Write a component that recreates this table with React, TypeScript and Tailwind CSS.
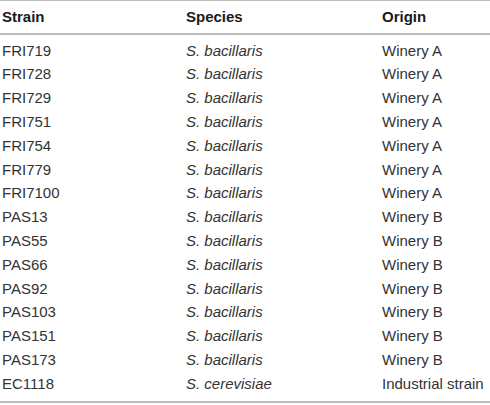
const ROWS: { strain: string; species: string; origin: string }[] = [
  { strain: "FRI719", species: "S. bacillaris", origin: "Winery A" },
  { strain: "FRI728", species: "S. bacillaris", origin: "Winery A" },
  { strain: "FRI729", species: "S. bacillaris", origin: "Winery A" },
  { strain: "FRI751", species: "S. bacillaris", origin: "Winery A" },
  { strain: "FRI754", species: "S. bacillaris", origin: "Winery A" },
  { strain: "FRI779", species: "S. bacillaris", origin: "Winery A" },
  { strain: "FRI7100", species: "S. bacillaris", origin: "Winery A" },
  { strain: "PAS13", species: "S. bacillaris", origin: "Winery B" },
  { strain: "PAS55", species: "S. bacillaris", origin: "Winery B" },
  { strain: "PAS66", species: "S. bacillaris", origin: "Winery B" },
  { strain: "PAS92", species: "S. bacillaris", origin: "Winery B" },
  { strain: "PAS103", species: "S. bacillaris", origin: "Winery B" },
  { strain: "PAS151", species: "S. bacillaris", origin: "Winery B" },
  { strain: "PAS173", species: "S. bacillaris", origin: "Winery B" },
  { strain: "EC1118", species: "S. cerevisiae", origin: "Industrial strain" },
];

export default function App() {
  return (
    <div className="w-[490px] bg-white text-[#333] font-['Liberation_Sans',Arial,sans-serif] text-[15px]">
      <div className="border-t border-[#bcbcbc]">
        {/* Header */}
        <div className="grid grid-cols-[184px_196px_1fr] h-[34px] items-center border-b-2 border-[#bcbcbc] pl-[2px] font-bold text-[#1a1a1a]">
          <span>Strain</span>
          <span>Species</span>
          <span>Origin</span>
        </div>

        {/* Body */}
        <div className="pt-[4px] pb-[5px] border-b-2 border-[#bcbcbc]">
          {ROWS.map((r) => (
            <div
              key={r.strain}
              className="grid grid-cols-[184px_196px_1fr] h-[23.8px] items-center pl-[2px]"
            >
              <span>{r.strain}</span>
              <span className="italic">{r.species}</span>
              <span className="whitespace-nowrap">{r.origin}</span>
            </div>
          ))}
        </div>
      </div>
    </div>
  );
}
